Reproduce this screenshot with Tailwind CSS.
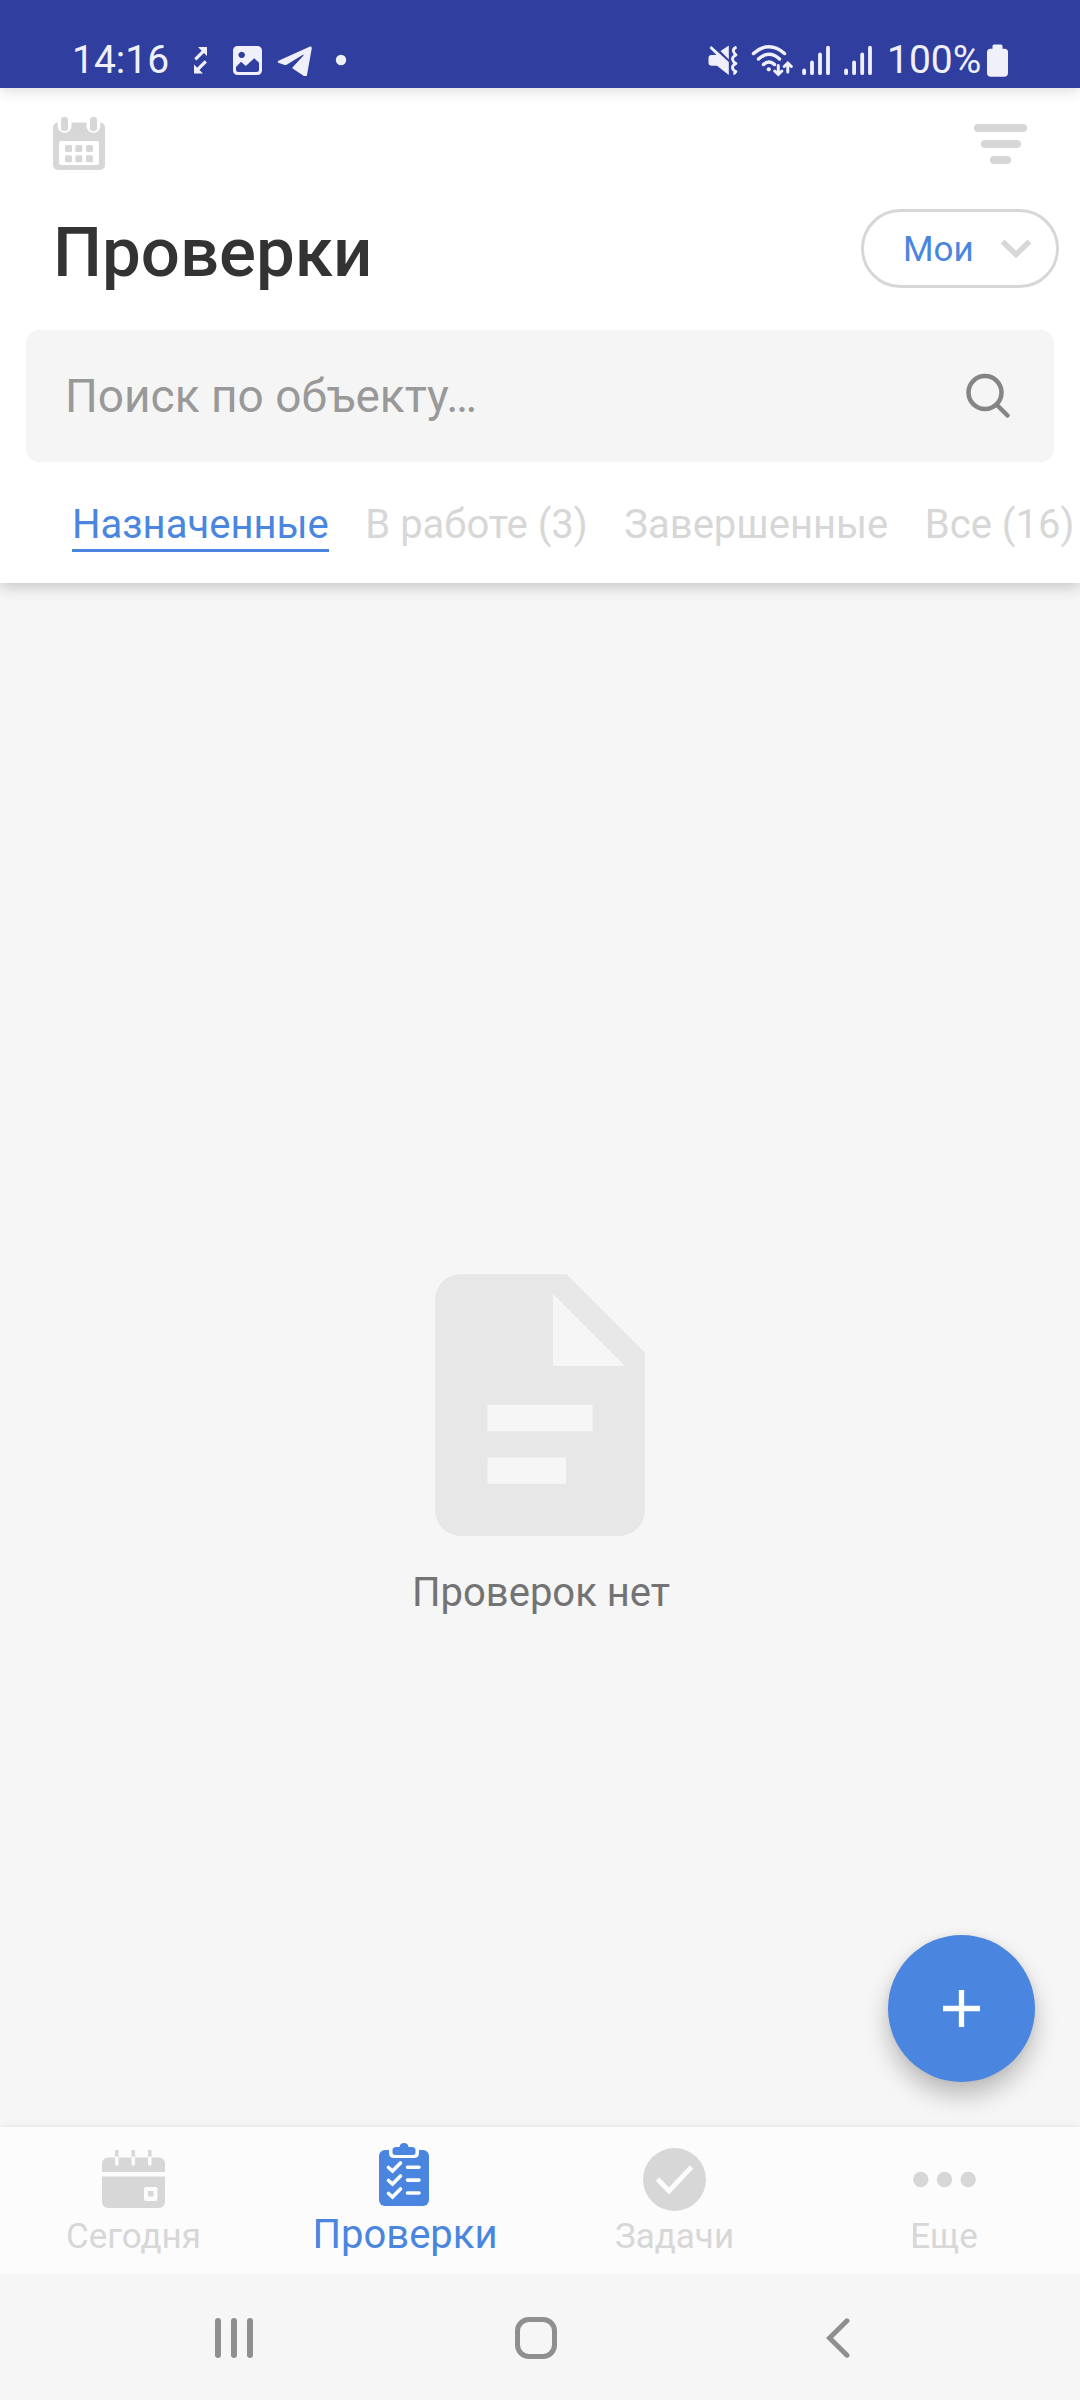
<!DOCTYPE html>
<html lang="ru">
<head>
<meta charset="utf-8">
<title>Проверки</title>
<script src="https://cdn.jsdelivr.net/npm/@tailwindcss/browser@4"></script>
</head>
<body class="bg-[#f6f6f6] font-['Roboto',sans-serif]">
<div class="relative flex h-[2400px] w-[1080px] flex-col overflow-hidden">

  <!-- Status bar -->
  <div class="relative z-20 flex h-[88px] shrink-0 items-center bg-[#303e9f] pt-8 pl-[72px] text-[#f0f0fb] shadow-[0_4px_12px_rgba(0,0,0,0.12)]">
    <span class="w-[118px] text-[39px] leading-[56px]">14:16</span>
    <svg class="h-[32px] w-[190px]" viewBox="190 44 190 32" fill="currentColor">
      <path d="M198 47h9v9zM194 64.500v9h9z"/>
      <path d="M195.300 59.300l9-9M205.800 61.300l-9 9" fill="none" stroke="currentColor" stroke-width="3.200"/>
      <path fill-rule="evenodd" d="M237.500 46h20a4.500 4.500 0 0 1 4.500 4.500v20a4.500 4.500 0 0 1-4.500 4.500h-20a4.500 4.500 0 0 1-4.500-4.500v-20a4.500 4.500 0 0 1 4.500-4.500z M241.700 51.700a3.200 3.200 0 1 0 .01 0z M236 67v2.600a2.500 2.500 0 0 0 2.500 2.500h18a2.500 2.500 0 0 0 2.500-2.500v-6.900l-4.800-4.400-8.400 7.700-4.800-4.200z"/>
      <path d="M309.500 46.800c1.500-.6 2.500.2 2.200 2L307 75c-.4 1.700-1.500 2-2.800 1.200L293 68.800c-.8-.6-.8-1.200-.1-1.900l10.400-11.200c.7-.9.1-1.300-.8-.7L287 64.500c-1.100.6-1.900.6-3 .3l-5-1.700c-1.700-.6-1.700-1.700 0-2.500z"/>
      <circle cx="341" cy="60" r="5.200"/>
    </svg>
    <div class="ml-auto flex items-center pr-[71px]">
      <svg class="h-[34px] w-[126px]" viewBox="706 43 126 34" fill="currentColor">
        <path d="M708.5 58q0-3 3-3h5l-7-7 1.800-1.900L728.800 62v13L717 65.800h-5q-3.500 0-3.500-3z M720.500 51l8.300-5.600v14z"/>
        <path d="M736.500 47q-4 2-3 4.500t2.500 3.500q-4 2-3.500 4.500t3.500 4q-4 2-3.500 4.500t3.500 3.500q-2 1-1 3" fill="none" stroke="currentColor" stroke-width="2.800" stroke-linejoin="round"/>
        <g fill="none" stroke="currentColor" stroke-width="3.500" stroke-linecap="round">
          <path d="M753.500 53.500q15.500-13.500 31 0M758.500 59q10.500-9.500 21 0M763.500 64.500q5.500-5 11 0"/>
          <path d="M778.300 65.500v8.500M774.700 71l3.600 3.500 3.600-3.500M787.800 72v-8M784.200 66.500l3.600-3.500 3.600 3.500" stroke-width="3"/>
        </g>
        <circle cx="768.800" cy="69.300" r="2.100"/>
        <g stroke="currentColor" stroke-width="3.800" stroke-linecap="round">
          <path d="M804.100 70.500v2.700M812 62.500v10.700M820 54.500v18.700M828 47.700v25.500"/>
        </g>
      </svg>
      <svg class="h-[34px] w-[55px]" viewBox="832 43 55 34">
        <path d="M846.100 70.500v2.700M854.100 62.500v10.700M862.200 54.500v18.700M870 47.700v25.500" stroke="currentColor" stroke-width="3.800" stroke-linecap="round"/>
      </svg>
      <span class="w-[99px] text-[39px] leading-[56px] whitespace-nowrap">100%</span>
      <svg class="h-[34px] w-[23px]" viewBox="986 43 23 34" fill="currentColor">
        <path d="M992.500 46q0-1.500 1.500-1.500h7q1.500 0 1.500 1.500v2.800h2q3.500 0 3.500 3.500v20.500q0 4-4 4h-13q-4 0-4-4v-20.500q0-3.500 3.500-3.500h2z"/>
      </svg>
    </div>
  </div>

  <!-- Header -->
  <header class="relative z-10 flex h-[495px] shrink-0 flex-col bg-white shadow-[0_4px_14px_rgba(0,0,0,0.2)]">
    <div class="flex h-[121px] items-start justify-between pr-[53px] pl-[53px] pt-[29px]">
      <svg class="h-[53px] w-[52px]" viewBox="0 0 52 53">
        <rect y="5.500" width="52" height="47.500" rx="5" fill="#d7d7d7"/>
        <path d="M4.700 0v10a7 7 0 0 0 13.800 0V0zM33.500 0v10a7 7 0 0 0 13.800 0V0z" fill="#fff"/>
        <rect x="6" y="24" width="40" height="24" rx="2" fill="#fff"/>
        <g fill="#d7d7d7">
          <rect x="8" width="7" height="14" rx="2.500"/><rect x="37" width="7" height="14" rx="2.500"/>
          <rect x="12" y="28" width="7" height="7" rx="1.500"/><rect x="22.300" y="28" width="7" height="7" rx="1.500"/><rect x="33" y="28" width="7" height="7" rx="1.500"/>
          <rect x="12" y="38.300" width="7" height="7" rx="1.500"/><rect x="22.300" y="38.300" width="7" height="7" rx="1.500"/><rect x="33" y="38.300" width="7" height="7" rx="1.500"/>
        </g>
      </svg>
      <div class="flex flex-col items-center gap-2 pt-[7px]">
        <div class="h-2 w-[53px] rounded-full bg-[#d7d7d7]"></div>
        <div class="h-2 w-[40px] rounded-full bg-[#d7d7d7]"></div>
        <div class="h-2 w-[21px] rounded-full bg-[#d7d7d7]"></div>
      </div>
    </div>
    <div class="flex h-[79px] items-center justify-between pr-[21px] pl-[53px]">
      <h1 class="pt-[7px] text-[69px] leading-[79px] font-medium text-[#333]">Проверки</h1>
      <button class="flex h-[79px] w-[198px] items-center justify-between rounded-full border-3 border-[#d7d7d7] pr-[24px] pl-[39px] text-[35px] text-[#4a86e0]">
        <span class="pt-[4px]">Мои</span>
        <svg class="h-[20px] w-[32px]" viewBox="0 0 32 20"><path d="M2.500 2.500L16 15.500 29.500 2.500" fill="none" stroke="#d7d7d7" stroke-width="5.500"/></svg>
      </button>
    </div>
    <div class="mx-[26px] mt-[42px] flex h-[132px] items-center justify-between rounded-[13px] bg-[#f5f5f5] pr-[43px] pl-[39px]">
      <span class="text-[46px] text-[#999]">Поиск по объекту…</span>
      <svg class="h-[46px] w-[46px]" viewBox="0 0 46 46" fill="none" stroke="#858585" stroke-width="4.500" stroke-linecap="round"><circle cx="20" cy="19.500" r="16.500"/><path d="M32 32l10.500 10.500"/></svg>
    </div>
    <nav class="mt-[36px] flex items-start gap-[36.500px] pl-[72px] text-[40px] leading-[53px] whitespace-nowrap text-[#d7d7d7]">
      <span class="h-[54px] border-b-3 border-[#4a86e0] text-[#4a86e0]">Назначенные</span>
      <span>В работе (3)</span>
      <span>Завершенные</span>
      <span>Все (16)</span>
    </nav>
  </header>

  <!-- Empty state -->
  <main class="relative flex flex-1 flex-col items-center pt-[691px]">
    <svg class="h-[262px] w-[210px]" viewBox="0 0 210 262"><path fill="#e7e7e7" fill-rule="evenodd" d="M26 0H131.500L210 78.500V236a26 26 0 0 1-26 26H26a26 26 0 0 1-26-26V26A26 26 0 0 1 26 0z M118 20v72h72z M52.500 131v26.300h105V131z M52.500 183.500v26.300H131v-26.300z"/></svg>
    <p class="mt-[33px] pl-[2px] text-[40px] leading-[48px] text-[#737373]">Проверок нет</p>
    <button class="absolute right-[45px] bottom-[45px] flex size-[147px] items-center justify-center rounded-full bg-[#4a86e0] shadow-[0_14px_24px_rgba(0,0,0,0.24),0_0_8px_rgba(0,0,0,0.06)]">
      <svg class="size-[37px]" viewBox="0 0 37 37"><path d="M18.500 0v37M0 18.500h37" stroke="#fff" stroke-width="5.300"/></svg>
    </button>
  </main>

  <!-- Bottom navigation -->
  <nav class="z-10 grid h-[147px] shrink-0 grid-cols-4 bg-[#fcfcfc] text-[35px] leading-[40px] text-[#d7d7d7] shadow-[0_0_6px_rgba(0,0,0,0.1)]">
    <div class="flex flex-col items-center pr-[3px] pt-[21px]">
      <svg class="h-[63px] w-[63px]" viewBox="0 0 63 63">
        <path fill="#d7d7d7" d="M6 9.500h51a6 6 0 0 1 6 6V24H0v-8.500a6 6 0 0 1 6-6zM0 28.500h63V54a6 6 0 0 1-6 6H6a6 6 0 0 1-6-6zM13 2h3.600v8H13zM29.500 2h3.600v8h-3.600zM46 2h3.600v8H46z"/>
        <path d="M14.800 10v6M31.300 10v6M47.800 10v6" stroke="#fcfcfc" stroke-width="3.600" stroke-linecap="round"/>
        <rect x="42" y="39" width="13.500" height="14" rx="2" fill="#fcfcfc"/><rect x="46" y="43" width="5.500" height="5.500" fill="#d7d7d7"/>
      </svg>
      <span class="mt-[6px]">Сегодня</span>
    </div>
    <div class="flex flex-col items-center pr-[2px] pt-[16px] text-[40px] text-[#4a86e0]">
      <svg class="h-[63px] w-[50px]" viewBox="0 0 50 63">
        <rect y="7" width="50" height="56" rx="6" fill="#4a86e0"/>
        <path d="M10 4v6q0 5 5 5h20q5 0 5-5V4z" fill="#fcfcfc"/>
        <path d="M13.500 7q0-3 4-3h3Q21 0 25 0t4.500 4h3q4 0 4 3v2.500q0 2.500-3 2.500h-17q-3 0-3-2.500z" fill="#4a86e0"/>
        <path d="M9.500 24.500l4 3.500 8-8M9.500 37.500l4 3.500 8-8M9.500 50.500l4 3.500 8-8M28.500 24.300h11.500M28.500 37.100h11.500M28.500 50h11.500" fill="none" stroke="#fcfcfc" stroke-width="3.600" stroke-linecap="round"/>
      </svg>
      <span class="mt-[9px] pl-[2px]">Проверки</span>
    </div>
    <div class="flex flex-col items-center pr-[1px] pt-[21px]">
      <svg class="size-[63px]" viewBox="0 0 63 63"><circle cx="31.500" cy="31.500" r="31.500" fill="#d7d7d7"/><path d="M14.500 31l11.500 12L48.500 19" fill="none" stroke="#fcfcfc" stroke-width="4.800"/></svg>
      <span class="mt-[6px]">Задачи</span>
    </div>
    <div class="flex flex-col items-center pr-[2px] pt-[21px]">
      <svg class="size-[63px]" viewBox="0 0 63 63" fill="#d7d7d7"><circle cx="7.800" cy="31.500" r="7.700"/><circle cx="31.500" cy="31.500" r="7.700"/><circle cx="55.200" cy="31.500" r="7.700"/></svg>
      <span class="mt-[6px]">Еще</span>
    </div>
  </nav>

  <!-- System navigation -->
  <div class="z-10 flex h-[126px] shrink-0 items-center justify-between bg-[#f6f6f6] pt-[2px] pr-[230px] pl-[215px]">
    <div class="flex gap-[10.500px]">
      <div class="h-10 w-[5.500px] rounded-full bg-[#8f8f8f]"></div>
      <div class="h-10 w-[5.500px] rounded-full bg-[#8f8f8f]"></div>
      <div class="h-10 w-[5.500px] rounded-full bg-[#8f8f8f]"></div>
    </div>
    <div class="ml-[-6px] h-[42px] w-[42px] rounded-[14px] border-5 border-[#8f8f8f]"></div>
    <svg class="h-10 w-[24px]" viewBox="0 0 24 40"><path d="M21 2.800L3.500 20 21 37.200" fill="none" stroke="#8f8f8f" stroke-width="5" stroke-linecap="round"/></svg>
  </div>
</div>
</body>
</html>
